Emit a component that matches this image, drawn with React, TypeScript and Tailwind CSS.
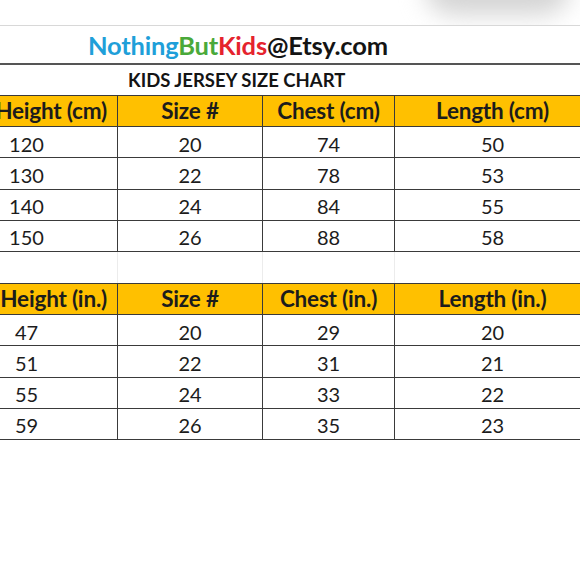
const cols = 'grid grid-cols-[182px_145px_132px_196px] ml-[-64px] w-[655px]'

const cm = {
  head: ['Height (cm)', 'Size #', 'Chest (cm)', 'Length (cm)'],
  rows: [
    ['120', '20', '74', '50'],
    ['130', '22', '78', '53'],
    ['140', '24', '84', '55'],
    ['150', '26', '88', '58'],
  ],
}

const inch = {
  head: ['Height (in.)', 'Size #', 'Chest (in.)', 'Length (in.)'],
  rows: [
    ['47', '20', '29', '20'],
    ['51', '22', '31', '21'],
    ['55', '24', '33', '22'],
    ['59', '26', '35', '23'],
  ],
}

function SizeTable({ head, rows }: { head: string[]; rows: string[][] }) {
  return (
    <div className="border-t-[1.5px] border-[#3a3a3a]">
      <div className={`${cols} bg-[#ffc000]`}>
        {head.map((h, i) => (
          <div
            key={h}
            className={`h-[31px] flex items-center border-b-[1.5px] border-r-[1.5px] border-[#3a3a3a] font-bold text-[22.5px] tracking-[-0.2px] text-[#1c1c1c] ${
              i === 0 ? 'justify-end pr-[10px]' : 'justify-center'
            }`}
          >
            {h}
          </div>
        ))}
      </div>
      {rows.map((r, ri) => (
        <div key={ri} className={cols}>
          {r.map((v, i) => (
            <div
              key={i}
              className="h-[31.25px] flex items-center justify-center pt-[3px] border-b-[1.5px] border-r-[1.5px] border-[#3a3a3a] text-[20px] text-[#1c1c1c]"
            >
              {v}
            </div>
          ))}
        </div>
      ))}
    </div>
  )
}

export default function App() {
  return (
    <div
      className="relative w-[580px] h-[580px] overflow-hidden bg-white"
      style={{ fontFamily: 'Lato, "Open Sans", sans-serif' }}
    >
      <div className="absolute top-[-40px] left-[425px] w-[145px] h-[55px] rounded-full bg-[#d4d4d4] blur-[12px]" />
      <div className="h-[25px]" />
      <div className="relative border-t border-[#d8d8d8] h-[40px] flex items-center pl-[88px] border-b-2 border-b-[#555] bg-white">
        <span className="text-[25.5px] font-bold tracking-[-0.2px] leading-none pt-[2px]">
          <span className="text-[#1f9fd9]">Nothing</span>
          <span className="text-[#4aa93a]">But</span>
          <span className="text-[#e5232d]">Kids</span>
          <span className="text-[#141414]">@Etsy.com</span>
        </span>
      </div>
      <div className="h-[30px] flex items-center pl-[128px]">
        <span className="text-[18.5px] font-bold text-[#141414] leading-none">KIDS JERSEY SIZE CHART</span>
      </div>
      <SizeTable {...cm} />
      <div className={`${cols} h-[31px]`}>
        <div className="border-r border-[#ececec]" />
        <div className="border-r border-[#ececec]" />
        <div className="border-r border-[#ececec]" />
        <div />
      </div>
      <SizeTable {...inch} />
    </div>
  )
}
